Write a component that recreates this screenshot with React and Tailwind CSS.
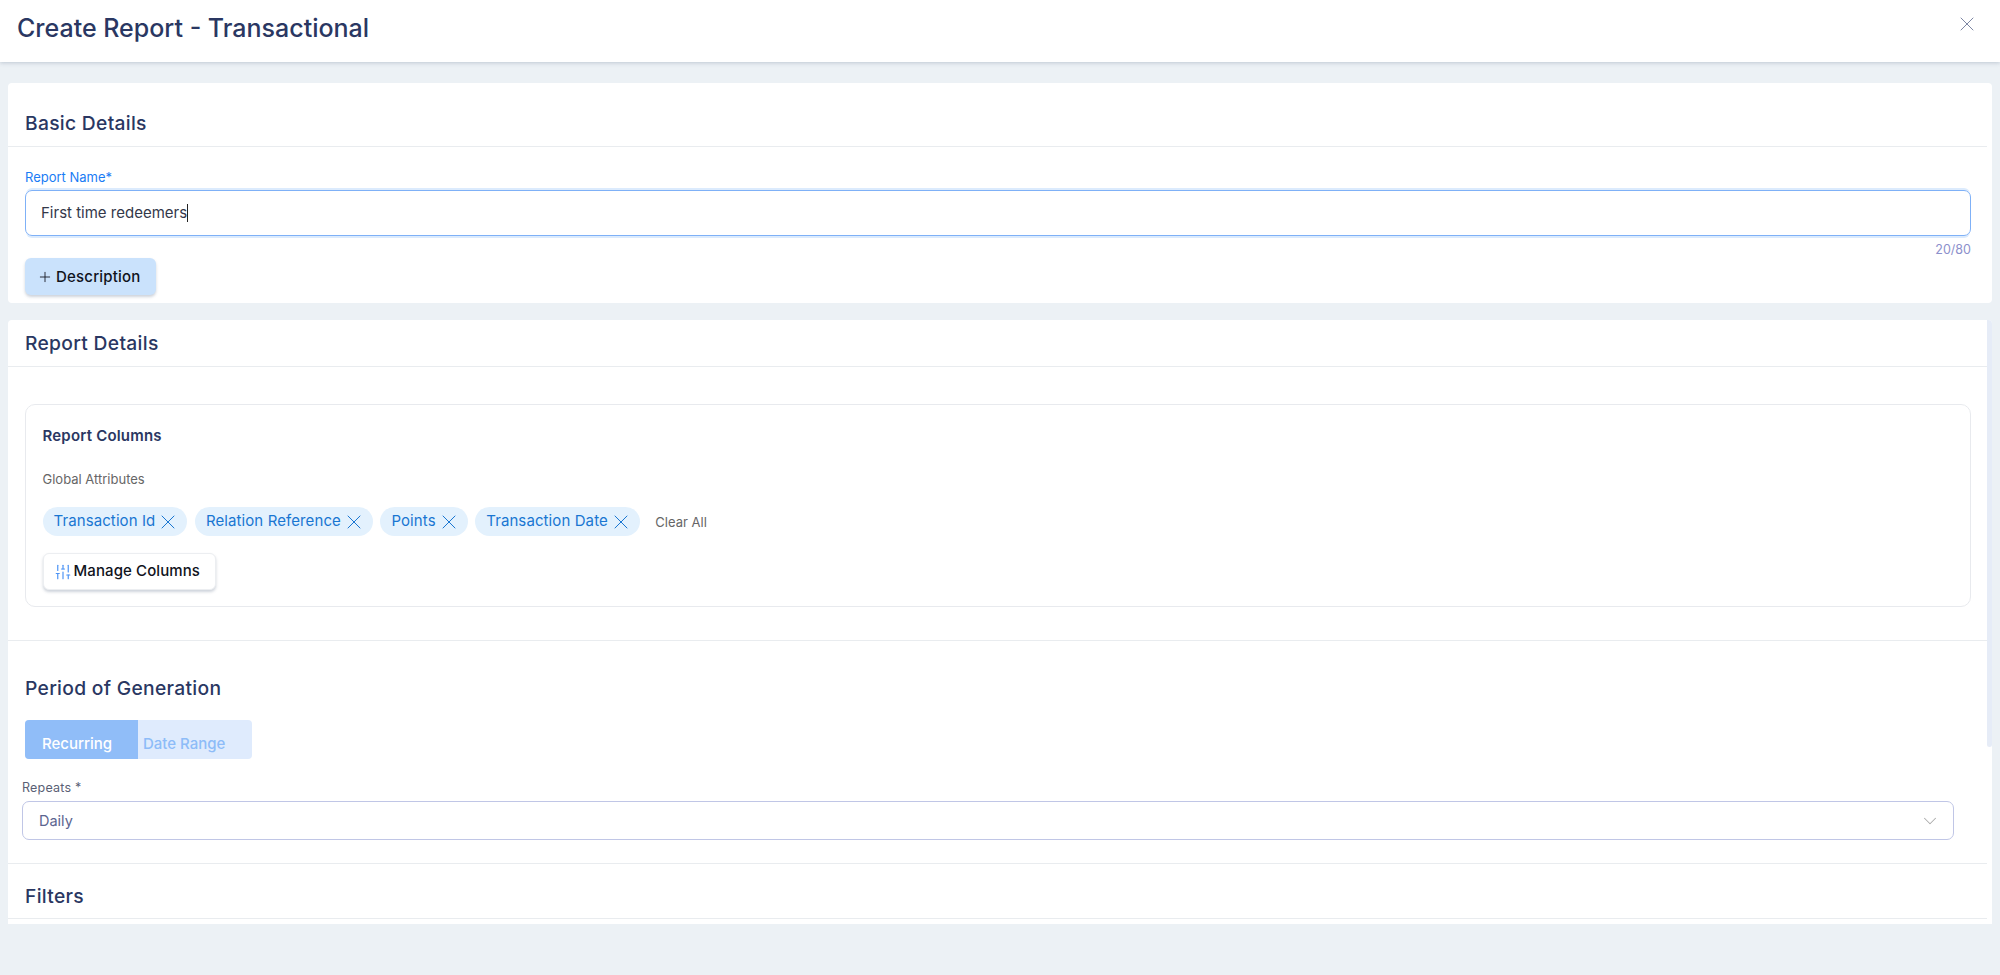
import { X, Plus, ChevronDown, SlidersVertical } from "lucide-react";

const Chip = ({ label }) => (
  <span className="flex h-[29px] items-center gap-px rounded-full bg-[#e3f1fd] pl-[11px] pr-[7px] text-[15px] tracking-[0.1px] text-[#1976d2]">
    {label}
    <X size={24} strokeWidth={1} />
  </span>
);

const SectionTitle = ({ children, className = "" }) => (
  <h2 className={`text-[19.25px] font-medium tracking-[0.3px] text-[#2a3762] ${className}`}>{children}</h2>
);

const App = () => {
  const chips = ["Transaction Id", "Relation Reference", "Points", "Transaction Date"];

  return (
    <div className="flex h-[975px] flex-col overflow-hidden bg-[#ecf1f5] font-['Inter',sans-serif]">
      <header className="flex h-[62px] shrink-0 items-start justify-between bg-white pl-[17px] pr-[21px] shadow-[0_1px_4px_rgba(60,80,110,0.25)]">
        <h1 className="mt-[10px] text-[25px] font-medium leading-[36px] text-[#2a3762]">Create Report - Transactional</h1>
        <X className="mt-[12px] text-[#7d86a3]" size={24} strokeWidth={1} />
      </header>

      <section className="mx-2 mt-[21px] h-[220px] shrink-0 rounded-[4px] bg-white">
        <div className="mr-[5px] flex h-[64px] items-end border-b border-[#e9ecef] pb-[8px] pl-[17px]">
          <SectionTitle>Basic Details</SectionTitle>
        </div>
        <div className="px-[17px] pr-[21px]">
          <label className="mt-[22px] block text-[13px] leading-[16px] text-[#1a7cf5]">Report Name*</label>
          <div className="mt-[5px] flex h-[46px] items-center rounded-[7px] border border-[#7fb1f7] pl-[15px] text-[15px] text-[#33384a] shadow-[0_-3px_0_-1px_#dcebfd,0_3px_0_-1px_#dcebfd]">
            First time redeemers<span className="h-[18px] w-px bg-[#222]" />
          </div>
          <div className="mt-[6px] text-right text-[12.5px] leading-[16px] text-[#8c90cc]">20/80</div>
          <button className="flex h-[37px] w-[131px] items-center gap-[3px] rounded-[6px] bg-[#cae2fc] pl-[12px] text-[15px] font-medium tracking-[0.2px] text-[#10131c] shadow-[0_2px_3px_rgba(60,80,110,0.25)]">
            <Plus size={16} strokeWidth={1.3} />
            <span className="pt-px">Description</span>
          </button>
        </div>
      </section>

      <section className="relative mx-2 mt-[17px] h-[604px] shrink-0 overflow-hidden rounded-t-[4px] bg-white">
        <div className="absolute right-0 top-0 h-[427px] w-[5px] rounded-b-[3px] bg-[#e6ecf7]" />
        <div className="mr-[5px] flex h-[47px] items-center border-b border-[#e9ecef] pl-[17px]">
          <SectionTitle>Report Details</SectionTitle>
        </div>

        <div className="mb-[33px] ml-[17px] mr-[21px] mt-[37px] h-[203px] rounded-[10px] border border-[#e8eaee] pl-[16.5px] pt-[21px]">
          <h3 className="text-[15px] font-semibold leading-[20px] tracking-[0.2px] text-[#2a3762]">Report Columns</h3>
          <p className="mt-[25px] text-[13px] leading-[16px] text-[#666]">Global Attributes</p>
          <div className="mt-[20px] flex items-center gap-[7.5px]">
            {chips.map((chip) => (
              <Chip key={chip} label={chip} />
            ))}
            <button className="ml-[8px] mt-[2px] text-[13px] text-[#666]">Clear All</button>
          </div>
          <button className="mt-[17px] flex h-[37px] w-[173px] items-center gap-[2px] rounded-[6px] border border-[#eceef1] bg-white pl-[10px] text-[15px] font-medium tracking-[0.1px] text-[#10131c] shadow-[0_2px_3px_rgba(60,80,110,0.25)]">
            <SlidersVertical className="text-[#4d94f5]" size={18} strokeWidth={1.6} />
            Manage Columns
          </button>
        </div>

        <div className="mr-[5px] h-[224px] border-y border-[#e9ecef] pt-[35px]">
          <SectionTitle className="pl-[17px] leading-[24px]">Period of Generation</SectionTitle>
          <div className="ml-[17px] mt-[20px] flex h-[39px] w-[227px] overflow-hidden rounded-[4px] bg-[#dfebfd] text-[15px] font-medium">
            <span className="flex w-[113px] items-end bg-[#90bdf8] pb-[4px] pl-[17px] text-white">Recurring</span>
            <span className="flex items-end pb-[4px] pl-[5px] text-[#8dbcf8]">Date Range</span>
          </div>
          <label className="ml-[14px] mt-[21px] block text-[12.5px] leading-[16px] tracking-[0.2px] text-[#5a5f75]">Repeats *</label>
          <div className="ml-[14px] mr-[33px] mt-[5px] flex h-[39px] items-center justify-between rounded-[7px] border border-[#c0c6e6] pl-[16px] pr-[12px] text-[14.5px] text-[#5c6590]">
            <span className="pt-px">Daily</span>
            <ChevronDown className="text-[#aaaaaa]" size={22} strokeWidth={1.1} />
          </div>
        </div>

        <div className="mr-[5px] flex h-[55px] items-end border-b border-[#e9ecef] pb-[7px] pl-[17px]">
          <SectionTitle>Filters</SectionTitle>
        </div>
      </section>
    </div>
  );
};

export default App;
